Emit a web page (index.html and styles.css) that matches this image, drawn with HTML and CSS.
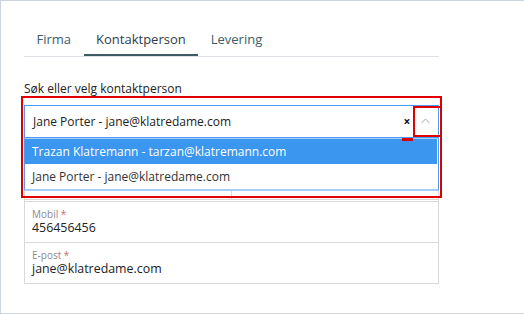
FILE: index.html
```html
<!DOCTYPE html>
<html lang="en">
<head>
    <meta charset="UTF-8">
    <meta name="viewport" content="width=device-width, initial-scale=1.0">
    <title>Kontaktperson</title>
    <link rel="stylesheet" href="styles.css">
</head>
<body>
    <div class="frame">
        <div class="tabs">
            <div class="tab">Firma</div>
            <div class="tab active">Kontaktperson</div>
            <div class="tab">Levering</div>
        </div>

        <label class="search-label">Søk eller velg kontaktperson</label>
        <div class="select-wrap">
            <div class="select">
                <span class="select-value">Jane Porter - jane@klatredame.com</span>
                <span class="select-clear">×</span>
                <span class="select-arrow">
                    <svg width="9" height="6" viewBox="0 0 9 6"><path d="M0.5 5.2 L4.5 1 L8.5 5.2" fill="none" stroke="#a9a9a9" stroke-width="1"/></svg>
                </span>
            </div>
            <ul class="dropdown">
                <li class="option highlighted">Trazan Klatremann - tarzan@klatremann.com</li>
                <li class="option">Jane Porter - jane@klatredame.com</li>
            </ul>
            <div class="mark mark-outer"></div>
            <div class="mark mark-arrow"></div>
            <div class="mark mark-bar"></div>
        </div>

        <div class="fields">
            <!-- name row sits under the open dropdown -->
            <div class="row split">
                <div class="field"></div>
                <div class="field"></div>
            </div>
            <div class="row">
                <div class="field"><span class="field-label">Mobil <em>*</em></span><span class="field-value">456456456</span></div>
            </div>
            <div class="row">
                <div class="field"><span class="field-label">E-post <em>*</em></span><span class="field-value">jane@klatredame.com</span></div>
            </div>
        </div>
    </div>
</body>
</html>
```

FILE: styles.css
```css
body {
    margin: 0;
    font-family: "Open Sans", "Liberation Sans", sans-serif;
    background-color: #fff;
    color: #222;
}

.frame {
    width: 521px;
    height: 312px;
    border: 1px solid #cdd4dc;
    padding-left: 23px;
    box-sizing: content-box;
}

.tabs {
    display: flex;
    width: 415px;
    margin-top: 25px;
    border-bottom: 1px solid #dde0e4;
    height: 30px;
}

.tab {
    padding: 0 12.5px;
    font-size: 13px;
    line-height: 27px;
    color: #3d5c68;
}

.tab.active {
    color: #2d4047;
    border-bottom: 2px solid #3f5b63;
}

.search-label {
    display: block;
    margin-top: 24px;
    font-size: 12px;
    line-height: 16px;
    color: #222;
}

.select-wrap {
    position: relative;
    width: 415px;
    margin-top: 8px;
}

.select {
    display: flex;
    align-items: center;
    height: 31px;
    border: 1px solid #4b9cf0;
    font-size: 12px;
}

.select-value {
    flex: 1;
    padding-left: 8px;
}

.select-clear {
    font-size: 12px;
    font-weight: bold;
    color: #111;
    width: 12px;
    text-align: center;
}

.select-arrow {
    width: 25px;
    display: flex;
    justify-content: center;
    padding-bottom: 2px;
}

.dropdown {
    position: absolute;
    top: 33px;
    left: 0;
    right: 0;
    margin: 0;
    padding: 0;
    list-style: none;
    background-color: #fff;
    border: 1px solid #4b9cf0;
    border-top-color: #a6cdf6;
    border-bottom: 2px solid #a6cdf6;
    z-index: 2;
}

.option {
    font-size: 12px;
    line-height: 25px;
    padding-left: 7px;
    color: #333;
}

.option.highlighted {
    background-color: #3a96ef;
    color: #fff;
    margin-right: 1px;
}

.mark {
    position: absolute;
    z-index: 3;
    border: 2px solid #e00000;
}

.mark-outer {
    left: -3px;
    top: -9px;
    width: 417px;
    height: 98px;
}

.mark-arrow {
    left: 389px;
    top: 1px;
    width: 25px;
    height: 27px;
}

.mark-bar {
    left: 378px;
    top: 33px;
    width: 11px;
    height: 0;
    border-width: 1px 0 2px;
}

.fields {
    width: 413px;
    margin-top: 22px;
    border: 1px solid #d9d9d9;
    border-bottom-width: 0;
}

.row {
    height: 40px;
    border-bottom: 1px solid #d9d9d9;
}

.row.split {
    display: flex;
    border-bottom: 3px double #d9d9d9;
    height: 38px;
}

.row.split .field {
    flex: 1;
}

.row.split .field + .field {
    border-left: 1px solid #d9d9d9;
}

.field {
    padding: 7px 7px 0;
}

.field-label {
    display: block;
    font-size: 10px;
    line-height: 11px;
    color: #8a8a8a;
}

.field-label em {
    font-style: normal;
    color: #c86b6b;
}

.field-value {
    display: block;
    font-size: 12.4px;
    line-height: 16px;
    color: #222;
}
```
